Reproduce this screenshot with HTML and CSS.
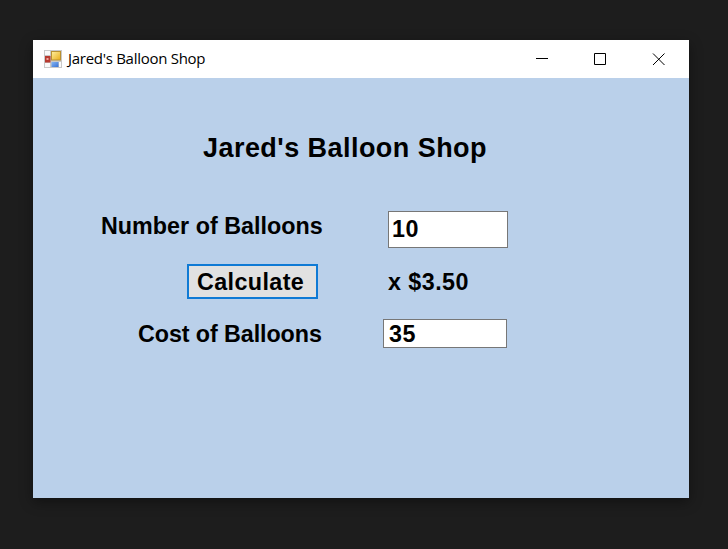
FILE: index.html
```
<!DOCTYPE html>
<html lang="en">
<head>
<meta charset="utf-8">
<title>Jared's Balloon Shop</title>
<link rel="stylesheet" href="styles.css">
</head>
<body>
<main class="window">
  <header class="titlebar">
    <svg class="app-icon" width="18" height="18" viewBox="0 0 18 18">
      <defs>
        <linearGradient id="gold" x1="0" y1="0" x2="1" y2="1"><stop offset="0" stop-color="#fff0a0"/><stop offset="1" stop-color="#e8ac18"/></linearGradient>
        <linearGradient id="blue" x1="0" y1="0" x2="1" y2="1"><stop offset="0" stop-color="#83b4f4"/><stop offset="1" stop-color="#3972d3"/></linearGradient>
      </defs>
      <rect width="18" height="18" fill="#c9c9c9"/>
      <path d="M1 1h5v4H1zM1 13h5v4H1zM15 12h2v5h-2z" fill="#fafafa"/>
      <rect x="7.500" y="1.500" width="9" height="8.500" fill="url(#gold)" stroke="#b99132"/>
      <rect x="1" y="6" width="5.500" height="6.500" fill="#b83a30"/>
      <rect x="2.500" y="8" width="2" height="2" fill="#efa59b"/>
      <rect x="7.500" y="12" width="7" height="5" fill="url(#blue)"/>
    </svg>
    <span class="caption">Jared's Balloon Shop</span>
    <svg class="controls" width="132" height="14" viewBox="0 0 132 14" fill="none" stroke="#000">
      <path d="M1 6.500h12M59.500 1.500h11v11h-11zM118 1.500l11.500 11.500M129.500 1.500L118 13"/>
    </svg>
  </header>
  <section class="form">
    <h1 class="title">Jared's Balloon Shop</h1>
    <div class="row count-row">
      <label class="label" for="count">Number of Balloons</label>
      <input class="field count" id="count" value="10">
    </div>
    <div class="row calc-row">
      <button class="calculate">Calculate</button>
      <span class="price">x $3.50</span>
    </div>
    <div class="row cost-row">
      <label class="label cost-label" for="cost">Cost of Balloons</label>
      <input class="field cost" id="cost" value="35">
    </div>
  </section>
</main>
</body>
</html>
```
FILE: styles.css
```
* { box-sizing: border-box; }
body { margin: 0; height: 549px; padding: 40px 39px 51px 33px; background: #1d1d1d; overflow: hidden; }
.window { height: 458px; background: #bad0ea; box-shadow: 0 4px 12px rgba(0, 0, 0, .4); }
.titlebar { display: flex; align-items: center; height: 38px; padding: 0 22px 0 11px; background: #fff; }
.caption { flex: 1; margin-left: 6px; padding-bottom: 2px; font: 15px "Open Sans", sans-serif; letter-spacing: -.28px; color: #000; }
.form { font: bold 23.3px/28px "Liberation Sans", sans-serif; color: #000; }
.title { margin: 0; padding: 54px 32px 0 0; font-size: 27px; font-weight: 700; line-height: 32px; letter-spacing: .45px; text-align: center; }
.row { display: flex; align-items: center; white-space: nowrap; }
.label { width: 222px; margin-left: 68px; letter-spacing: .02px; }
.field, .calculate { font: inherit; color: inherit; border-radius: 0; outline: 0; }
.field { letter-spacing: .5px; background: #fff; border: 1px solid #777; }
.count-row { margin-top: 47px; height: 37px; }
.count-row .label { padding-bottom: 7px; }
.count { width: 120px; height: 37px; margin-left: 65px; padding: 0 3px 1px; }
.calc-row { margin-top: 16px; height: 35px; }
.calculate { width: 131px; height: 35px; margin-left: 154px; padding: 0 0 0 8px; letter-spacing: .4px; background: #e1e1e1; border: 2px solid #0f7ad5; text-align: left; }
.price { margin-left: 70px; letter-spacing: .45px; }
.cost-row { margin-top: 20px; height: 29px; }
.cost-label { width: 184px; margin-left: 105px; letter-spacing: -.08px; }
.cost { width: 124px; height: 29px; margin-left: 61px; padding: 2px 5px 0; }
```
